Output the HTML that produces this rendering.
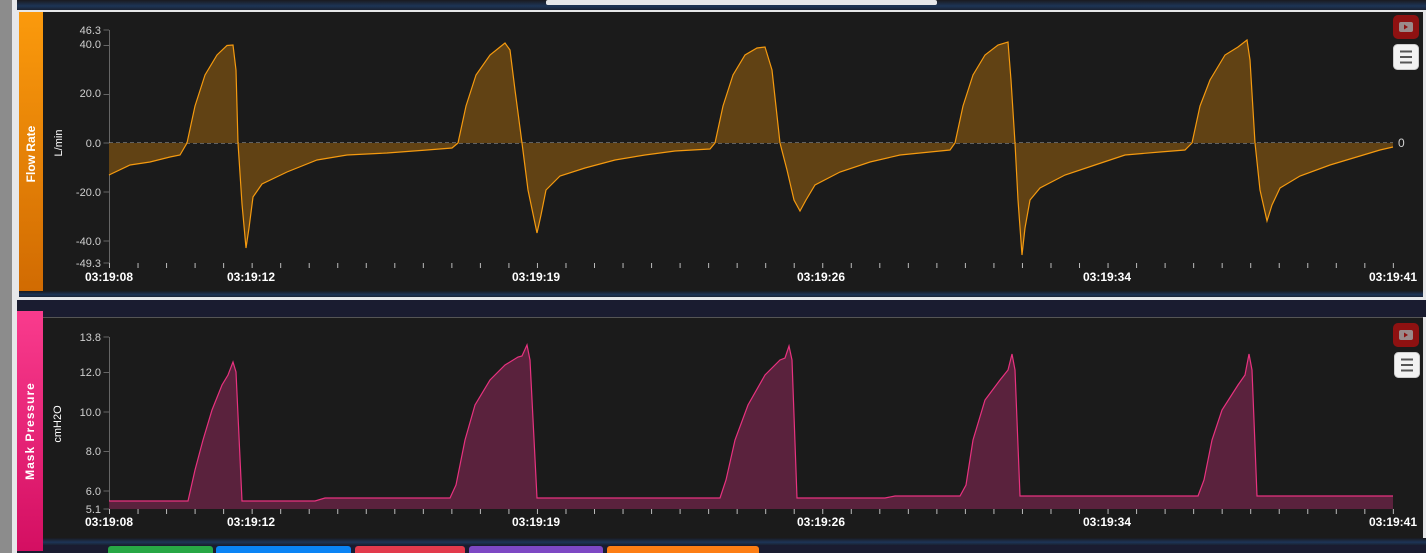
<!DOCTYPE html>
<html><head><meta charset="utf-8"><style>
html,body{margin:0;padding:0;background:#e6e7e9;width:1426px;height:553px;overflow:hidden}
svg{display:block}
text{font-family:"Liberation Sans",sans-serif}
</style></head><body>
<svg width="1426" height="553" viewBox="0 0 1426 553" xmlns="http://www.w3.org/2000/svg">
<defs>
<linearGradient id="band" x1="0" y1="0" x2="0" y2="1"><stop offset="0" stop-color="#1a1a1f"/><stop offset="0.6" stop-color="#1d3557"/><stop offset="1" stop-color="#1a2233"/></linearGradient>
<linearGradient id="or" x1="0" y1="0" x2="0" y2="1"><stop offset="0" stop-color="#fb9a0c"/><stop offset="1" stop-color="#d06a02"/></linearGradient>
<linearGradient id="pk" x1="0" y1="0" x2="0" y2="1"><stop offset="0" stop-color="#f93b8d"/><stop offset="1" stop-color="#d40f62"/></linearGradient>
</defs>
<rect x="0" y="0" width="1426" height="553" fill="#e6e7e9"/>
<rect x="0" y="0" width="12" height="553" fill="#8c8c8c"/>
<!-- top bar -->
<rect x="17" y="0" width="1409" height="10" fill="url(#band)"/>
<rect x="546" y="0" width="391" height="5" rx="2" fill="#e6e7e9"/>
<!-- panel 1 -->
<rect x="19" y="12" width="1404" height="285" fill="#1b1b1b"/>
<rect x="19" y="12" width="24" height="285" fill="url(#or)"/>
<rect x="19" y="291" width="1404" height="6" fill="url(#band)"/>
<text transform="translate(35,154) rotate(-90)" text-anchor="middle" fill="#fff" font-size="12" font-weight="bold">Flow Rate</text>
<text transform="translate(62,143) rotate(-90)" text-anchor="middle" fill="#fff" font-size="11">L/min</text>
<g fill="#cfcfcf" font-size="11" text-anchor="end">
<text x="101" y="34">46.3</text><text x="101" y="48">40.0</text><text x="101" y="97">20.0</text><text x="101" y="147">0.0</text><text x="101" y="196">-20.0</text><text x="101" y="245">-40.0</text><text x="101" y="267">-49.3</text>
</g>
<g stroke="#666" stroke-width="1"><path d="M103.5,30H109M103.5,45.5H109M103.5,94.5H109M103.5,143H109M103.5,192H109M103.5,241H109M103.5,263H109"/></g>
<line x1="109.5" y1="30" x2="109.5" y2="263" stroke="#666"/>
<line x1="109" y1="143" x2="1393" y2="143" stroke="#aaa" stroke-dasharray="4 3"/>
<path d="M109,175 L130,165 L150,162 L170,157 L180,155 L187,143 L195,106 L205,75 L217,55 L227,45.5 L233,45 L236,70 L238,143 L242,204 L246,248 L249,228 L253,197 L262,184 L287,172 L317,160 L347,155 L387,153 L427,150 L452,148 L458,143 L466,106 L476,75 L490,55 L500,47 L505,43 L510,50 L515,90 L522,143 L528,190 L537,233 L541,215 L546,190 L560,176 L585,168 L615,160 L645,155 L675,151 L710,149 L715,143 L723,106 L733,75 L745,55 L757,48 L765,47 L772,70 L780,143 L787,170 L794,200 L800,211 L806,200 L815,185 L840,172 L870,162 L900,155 L930,152 L950,150 L955,143 L963,106 L973,75 L985,55 L998,45 L1008,42 L1011,80 L1015,143 L1018,200 L1022,255 L1025,228 L1030,200 L1040,188 L1065,175 L1095,165 L1125,155 L1160,152 L1185,150 L1192,143 L1200,106 L1210,80 L1225,55 L1238,47 L1247,40 L1250,60 L1255,143 L1260,190 L1267,221 L1272,205 L1280,188 L1300,176 L1330,165 L1360,156 L1380,150 L1393,147 L1393,143 L109,143 Z" fill="#614214" stroke="none"/>
<path d="M109,175 L130,165 L150,162 L170,157 L180,155 L187,143 L195,106 L205,75 L217,55 L227,45.5 L233,45 L236,70 L238,143 L242,204 L246,248 L249,228 L253,197 L262,184 L287,172 L317,160 L347,155 L387,153 L427,150 L452,148 L458,143 L466,106 L476,75 L490,55 L500,47 L505,43 L510,50 L515,90 L522,143 L528,190 L537,233 L541,215 L546,190 L560,176 L585,168 L615,160 L645,155 L675,151 L710,149 L715,143 L723,106 L733,75 L745,55 L757,48 L765,47 L772,70 L780,143 L787,170 L794,200 L800,211 L806,200 L815,185 L840,172 L870,162 L900,155 L930,152 L950,150 L955,143 L963,106 L973,75 L985,55 L998,45 L1008,42 L1011,80 L1015,143 L1018,200 L1022,255 L1025,228 L1030,200 L1040,188 L1065,175 L1095,165 L1125,155 L1160,152 L1185,150 L1192,143 L1200,106 L1210,80 L1225,55 L1238,47 L1247,40 L1250,60 L1255,143 L1260,190 L1267,221 L1272,205 L1280,188 L1300,176 L1330,165 L1360,156 L1380,150 L1393,147" fill="none" stroke="#f59a0f" stroke-width="1.2"/>
<text x="1398" y="147" fill="#cfcfcf" font-size="12">0</text>
<line x1="109" y1="265.5" x2="1395" y2="265.5" stroke="#bbb" stroke-width="5" stroke-dasharray="1 27.53"/>
<g fill="#fff" font-size="12" font-weight="bold" text-anchor="middle">
<text x="109" y="281">03:19:08</text><text x="251" y="281">03:19:12</text><text x="536" y="281">03:19:19</text><text x="821" y="281">03:19:26</text><text x="1107" y="281">03:19:34</text><text x="1393" y="281">03:19:41</text>
</g>
<rect x="1393" y="15" width="26" height="24" rx="5" fill="#8e1111"/>
<rect x="1399" y="22" width="14" height="10" rx="2" fill="#9a8a8a"/><path d="M1404,24.5 L1408,27 L1404,29.5Z" fill="#8e1111"/>
<rect x="1393.5" y="44.5" width="25" height="25" rx="4" fill="#f2f2f2" stroke="#ccc"/>
<path d="M1400,51.5h12M1400,57h12M1400,62.5h12" stroke="#555" stroke-width="2"/>

<!-- panel 2 -->
<rect x="17" y="300" width="1409" height="17" fill="#1a1c30"/>
<rect x="17" y="317" width="1406" height="228" fill="#1b1b1b"/>
<line x1="43" y1="317.5" x2="1423" y2="317.5" stroke="#555"/>
<rect x="17" y="538" width="1409" height="7" fill="url(#band)"/>
<rect x="17" y="545" width="1409" height="8" fill="#1a1c30"/>
<rect x="17" y="311" width="26" height="240" fill="url(#pk)"/>
<text transform="translate(34,431) rotate(-90)" text-anchor="middle" fill="#fff" font-size="12" font-weight="bold" letter-spacing="1">Mask Pressure</text>
<text transform="translate(61,424) rotate(-90)" text-anchor="middle" fill="#fff" font-size="11">cmH2O</text>
<g fill="#cfcfcf" font-size="11" text-anchor="end">
<text x="101" y="341">13.8</text><text x="101" y="376">12.0</text><text x="101" y="416">10.0</text><text x="101" y="455">8.0</text><text x="101" y="495">6.0</text><text x="101" y="513">5.1</text>
</g>
<path d="M103.5,337H109M103.5,372.5H109M103.5,412H109M103.5,451.5H109M103.5,491H109M103.5,509H109" stroke="#666"/>
<line x1="109.5" y1="337" x2="109.5" y2="509" stroke="#666"/>
<path d="M109,501 L188,501 L195,470 L203,440 L212,410 L222,385 L228,375 L233,362 L236,372 L242,501 L315,501 L325,498 L450,498 L456,485 L465,440 L475,405 L490,380 L505,365 L518,357 L522,356 L527,345 L530,360 L537,498 L720,498 L726,480 L735,440 L748,405 L765,375 L780,360 L785,358 L789,346 L792,360 L797,498 L885,498 L895,496 L960,496 L966,485 L973,440 L985,400 L1000,380 L1008,370 L1012,354 L1015,370 L1020,496 L1198,496 L1204,480 L1212,440 L1222,410 L1238,385 L1245,375 L1249,354 L1252,370 L1257,496 L1393,496 L1393,509 L109,509 Z" fill="#5a223d"/>
<path d="M109,501 L188,501 L195,470 L203,440 L212,410 L222,385 L228,375 L233,362 L236,372 L242,501 L315,501 L325,498 L450,498 L456,485 L465,440 L475,405 L490,380 L505,365 L518,357 L522,356 L527,345 L530,360 L537,498 L720,498 L726,480 L735,440 L748,405 L765,375 L780,360 L785,358 L789,346 L792,360 L797,498 L885,498 L895,496 L960,496 L966,485 L973,440 L985,400 L1000,380 L1008,370 L1012,354 L1015,370 L1020,496 L1198,496 L1204,480 L1212,440 L1222,410 L1238,385 L1245,375 L1249,354 L1252,370 L1257,496 L1393,496" fill="none" stroke="#e8327f" stroke-width="1.2"/>
<line x1="109" y1="511.5" x2="1395" y2="511.5" stroke="#bbb" stroke-width="5" stroke-dasharray="1 27.53"/>
<g fill="#fff" font-size="12" font-weight="bold" text-anchor="middle">
<text x="109" y="526">03:19:08</text><text x="251" y="526">03:19:12</text><text x="536" y="526">03:19:19</text><text x="821" y="526">03:19:26</text><text x="1107" y="526">03:19:34</text><text x="1393" y="526">03:19:41</text>
</g>
<rect x="1393" y="323" width="26" height="24" rx="5" fill="#8e1111"/>
<rect x="1399" y="330" width="14" height="10" rx="2" fill="#9a8a8a"/><path d="M1404,332.5 L1408,335 L1404,337.5Z" fill="#8e1111"/>
<rect x="1394.5" y="352.5" width="25" height="25" rx="4" fill="#f2f2f2" stroke="#ccc"/>
<path d="M1401,359.5h12M1401,365h12M1401,370.5h12" stroke="#555" stroke-width="2"/>
<!-- bottom buttons -->
<rect x="108" y="546" width="105" height="10" rx="3" fill="#28a745"/>
<rect x="216" y="546" width="135" height="10" rx="3" fill="#0a84f5"/>
<rect x="355" y="546" width="110" height="10" rx="3" fill="#e23a4c"/>
<rect x="469" y="546" width="134" height="10" rx="3" fill="#7d48c4"/>
<rect x="607" y="546" width="152" height="10" rx="3" fill="#fd7e14"/>
</svg>
</body></html>
